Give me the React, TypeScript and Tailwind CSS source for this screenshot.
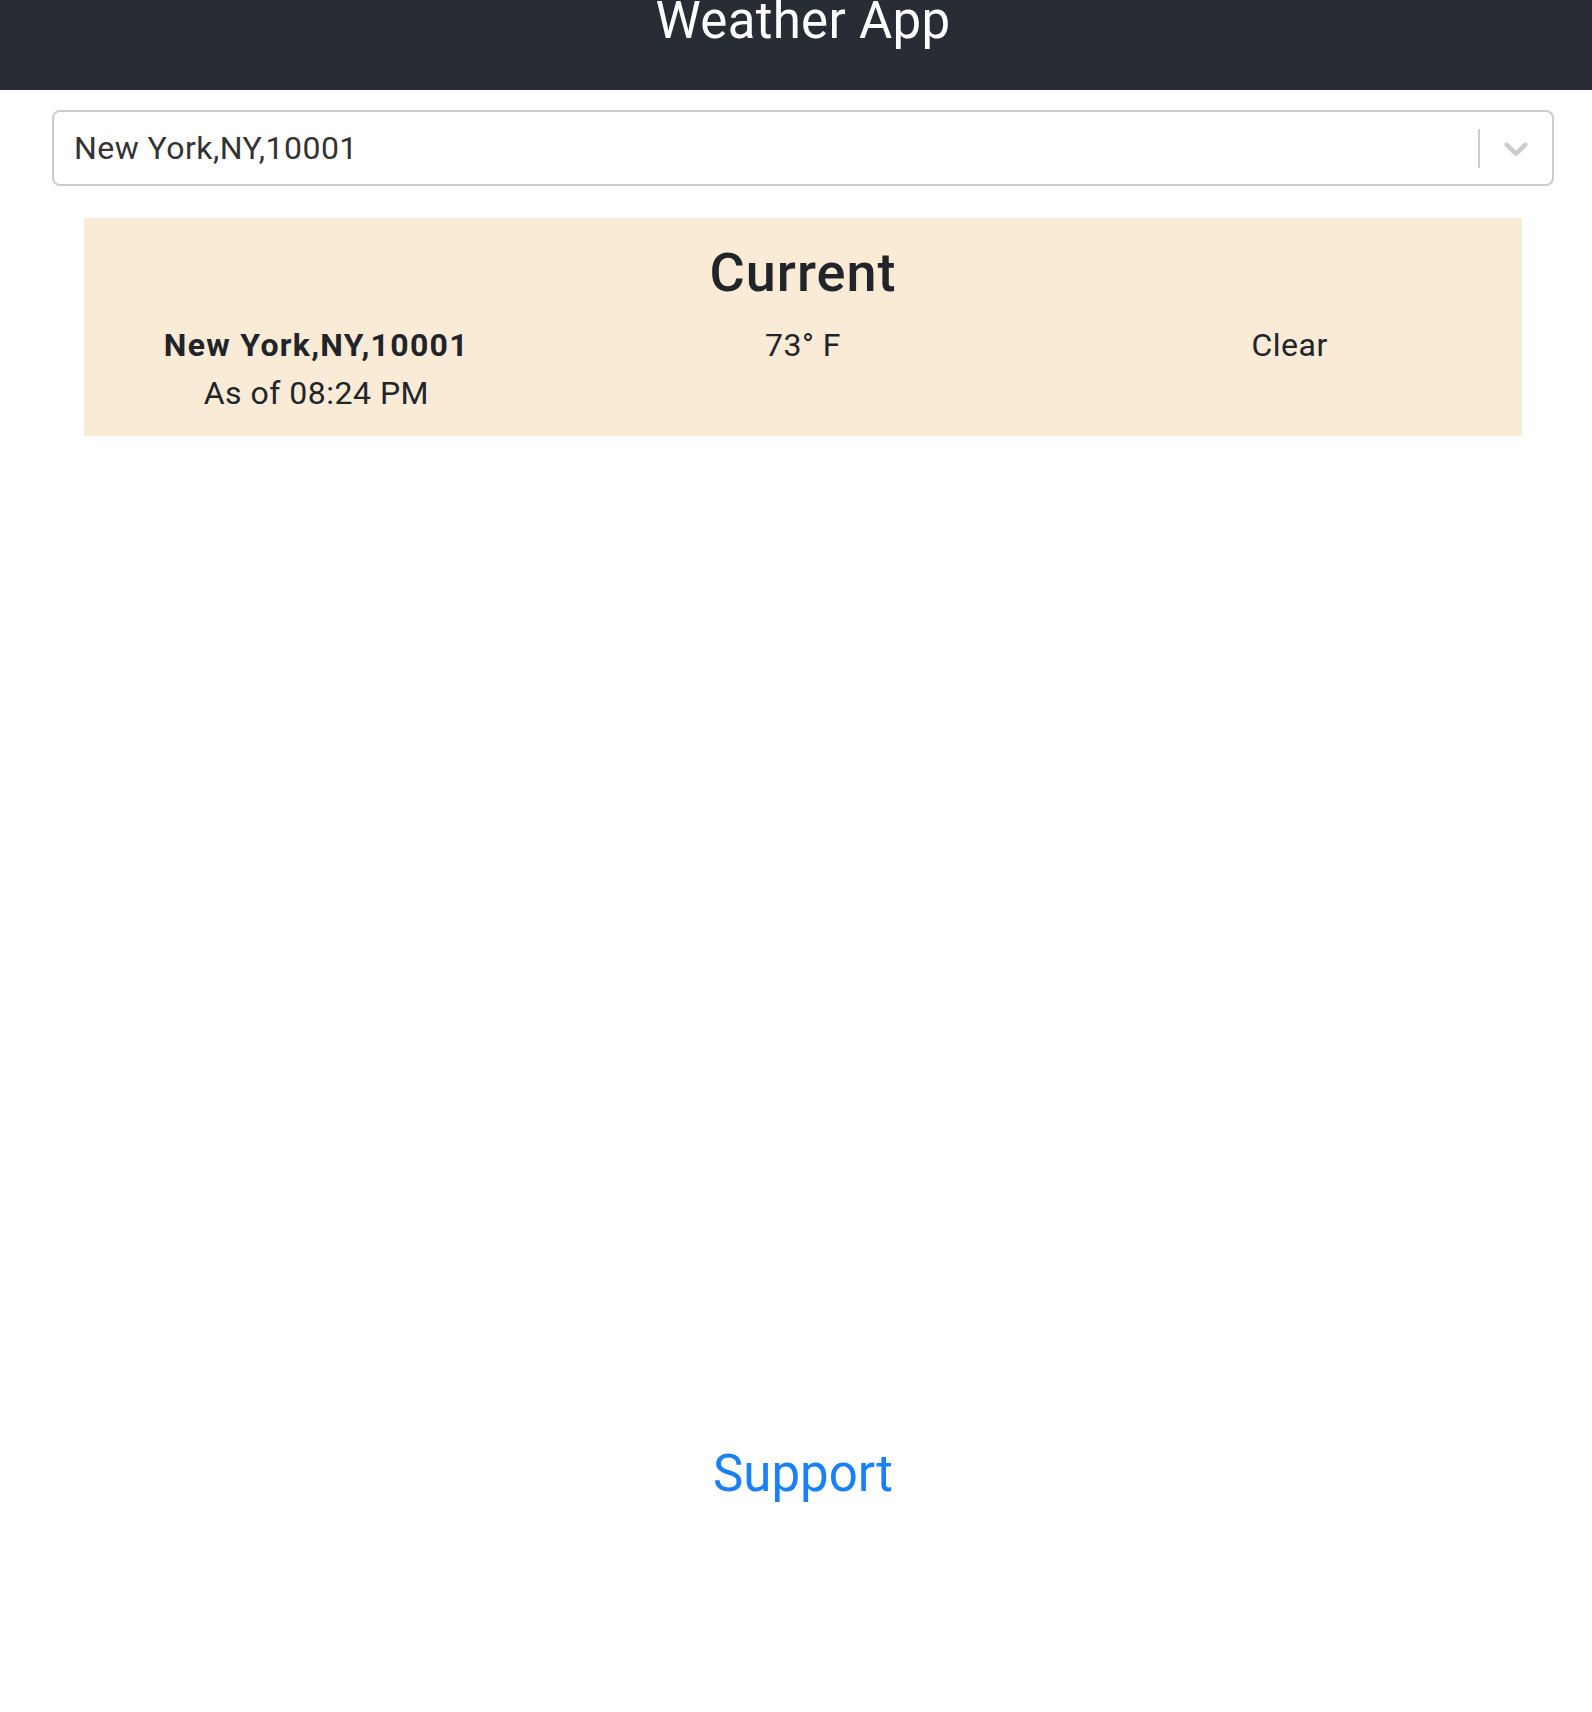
import React from "react";

function Chevron() {
  return (
    <svg viewBox="0 0 20 20" className="h-10 w-10 fill-[#cccccc]" aria-hidden="true">
      <path d="M4.516 7.548c0.436-0.446 1.043-0.481 1.576 0l3.908 3.747 3.908-3.747c0.533-0.481 1.141-0.446 1.574 0 0.436 0.445 0.408 1.197 0 1.615-0.406 0.418-4.695 4.502-4.695 4.502-0.217 0.223-0.502 0.335-0.787 0.335s-0.57-0.112-0.789-0.335c0 0-4.287-4.084-4.695-4.502s-0.436-1.17 0-1.615z" />
    </svg>
  );
}

export default function App() {
  return (
    <div className="w-full overflow-hidden bg-white font-['Roboto',sans-serif]">
      <main className="w-[1606px]">
        <header className="flex h-[90px] justify-center bg-[#282c34]">
          <h1 className="text-[51px] leading-[41px] font-normal tracking-[0.3px] text-white">Weather App</h1>
        </header>

        {/* location picker */}
        <div className="mx-[52px] mt-[20px] flex h-[76px] items-center rounded-lg border-2 border-[#cccccc] bg-white">
          <div className="flex-1 pl-[20px] text-[32px] tracking-[0.45px] text-[#333333]">New York,NY,10001</div>
          <span className="h-[39px] w-[2px] bg-[#cccccc]" />
          <div className="flex w-[72px] items-center justify-center">
            <Chevron />
          </div>
        </div>

        <section className="mx-[84px] mt-[32px] bg-[#faebd7] pt-[23px] pb-[19px] text-[#212529]">
          <h2 className="text-center text-[54px] leading-[1.2] font-medium tracking-[1px]">Current</h2>
          <div className="mx-[-11px] mt-[15px] grid grid-cols-3 text-center text-[32px] leading-[48px] tracking-[0.5px]">
            <div>
              <div className="font-bold tracking-[1.3px]">New York,NY,10001</div>
              <div>As of 08:24 PM</div>
            </div>
            <div>73° F</div>
            <div>Clear</div>
          </div>
        </section>

        <footer className="mt-[1000px] pb-[200px] text-center">
          <a href="#" className="text-[51px] leading-[1.5] text-[#1a80f8]">
            Support
          </a>
        </footer>
      </main>
    </div>
  );
}
